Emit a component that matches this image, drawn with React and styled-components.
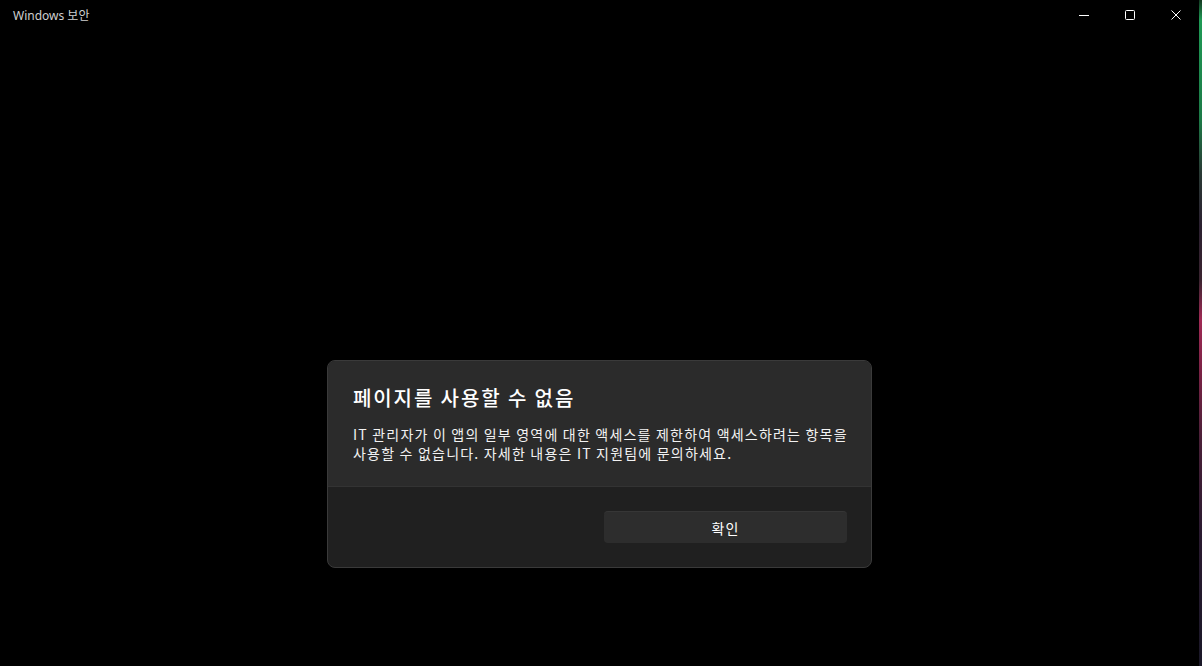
import React from "react";
import styled, { createGlobalStyle } from "styled-components";

const GlobalStyle = createGlobalStyle`
  html, body {
    margin: 0;
    padding: 0;
    background: #000;
    height: 100%;
  }
  #root {
    height: 100%;
  }
`;

const Screen = styled.div`
  display: flex;
  width: 100%;
  height: 666px;
  overflow: hidden;
  font-family: "Noto Sans", "Noto Sans CJK KR", sans-serif;
`;

const Window = styled.div`
  flex: 1;
  display: flex;
  flex-direction: column;
  background: #000;
`;

const DesktopEdge = styled.div`
  width: 3px;
  background: linear-gradient(
    180deg,
    #143a22 0%,
    #1f9a55 3%,
    #1d7a47 18%,
    #2a3a35 26%,
    #2b2030 34%,
    #3a2430 42%,
    #a02a55 48%,
    #7a2245 56%,
    #4a2038 66%,
    #2a1a30 80%,
    #1a1828 100%
  );
`;

const TitleBar = styled.div`
  display: flex;
  align-items: center;
  height: 30px;
  flex-shrink: 0;
`;

const AppTitle = styled.div`
  flex: 1;
  padding-left: 13px;
  font-size: 12px;
  color: #cfcfcf;
  font-family: "Noto Sans", "Noto Sans CJK KR", sans-serif;
`;

const CaptionButton = styled.div`
  width: 46px;
  height: 30px;
  display: flex;
  align-items: center;
  justify-content: center;
  color: #fff;
`;

const Content = styled.div`
  flex: 1;
  display: flex;
  justify-content: center;
  align-items: flex-start;
  padding-top: 330px;
`;

const Dialog = styled.div`
  width: 543px;
  border: 1px solid #3a3a3a;
  border-radius: 8px;
  overflow: hidden;
  background: #202020;
  box-shadow: 0 8px 32px rgba(0, 0, 0, 0.6);
`;

const DialogBody = styled.div`
  background: #2b2b2b;
  padding: 23px 20px 23px 25px;
  border-bottom: 1px solid #333;
`;

const Title = styled.h2`
  margin: 0 0 13px;
  font-family: "Noto Sans CJK KR", sans-serif;
  font-size: 20px;
  font-weight: 500;
  line-height: 28px;
  color: #fff;
  letter-spacing: 1.9px;
`;

const Message = styled.p`
  margin: 0;
  font-family: "Noto Sans CJK KR", sans-serif;
  font-size: 14px;
  line-height: 19px;
  color: #f2f2f2;
  letter-spacing: 1.2px;
  white-space: nowrap;
`;

const DialogFooter = styled.div`
  display: flex;
  justify-content: flex-end;
  padding: 24px 24px 24px;
`;

const PrimaryButton = styled.button`
  width: 243px;
  height: 32px;
  border: none;
  border-top: 1px solid #363636;
  border-radius: 4px;
  background: #2d2d2d;
  color: #fff;
  font-family: "Noto Sans CJK KR", sans-serif;
  font-size: 14px;
  letter-spacing: 1px;
  cursor: default;
`;

const Minimize = () => (
  <svg width="10" height="10" viewBox="0 0 10 10">
    <path d="M0 5.5h10" stroke="currentColor" strokeWidth="1" />
  </svg>
);

const Maximize = () => (
  <svg width="10" height="10" viewBox="0 0 10 10">
    <rect x="0.5" y="0.5" width="9" height="9" rx="1" fill="none" stroke="currentColor" strokeWidth="1" />
  </svg>
);

const Close = () => (
  <svg width="10" height="10" viewBox="0 0 10 10">
    <path d="M0.5 0.5l9 9M9.5 0.5l-9 9" stroke="currentColor" strokeWidth="1" />
  </svg>
);

const App = () => {
  return (
    <>
      <GlobalStyle />
      <Screen>
        <Window>
          <TitleBar>
            <AppTitle>Windows 보안</AppTitle>
            <CaptionButton>
              <Minimize />
            </CaptionButton>
            <CaptionButton>
              <Maximize />
            </CaptionButton>
            <CaptionButton>
              <Close />
            </CaptionButton>
          </TitleBar>
          <Content>
            <Dialog>
              <DialogBody>
                <Title>페이지를 사용할 수 없음</Title>
                <Message>
                  IT 관리자가 이 앱의 일부 영역에 대한 액세스를 제한하여 액세스하려는 항목을
                  <br />
                  사용할 수 없습니다. 자세한 내용은 IT 지원팀에 문의하세요.
                </Message>
              </DialogBody>
              <DialogFooter>
                <PrimaryButton>확인</PrimaryButton>
              </DialogFooter>
            </Dialog>
          </Content>
        </Window>
        <DesktopEdge />
      </Screen>
    </>
  );
};

export default App;
